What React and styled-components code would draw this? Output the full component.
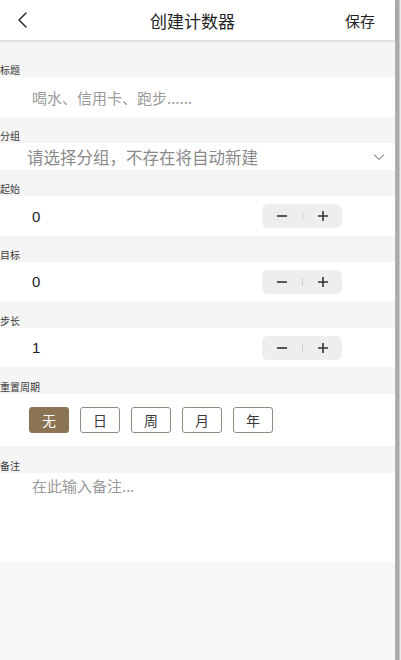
import React from "react";
import styled, { createGlobalStyle } from "styled-components";

const Global = createGlobalStyle`
  html, body { margin: 0; padding: 0; background: #ffffff; }
  body { font-family: "Noto Sans CJK SC", "Noto Sans", sans-serif; -webkit-font-smoothing: antialiased; }
  * { box-sizing: border-box; }
`;

const Frame = styled.div`
  display: flex;
  width: 401px;
  height: 660px;
  overflow: hidden;
`;

const Page = styled.div`
  width: 395px;
  display: flex;
  flex-direction: column;
  background: #f7f7f7;
`;

const Scrollbar = styled.div`
  width: 6px;
  background: linear-gradient(to right, #b8b8b8 0, #a6a6a6 2px, #b0b0b0 4px, #e4e4e4 5px, #f2f2f2 6px);
`;

const Header = styled.div`
  height: 40px;
  display: grid;
  grid-template-columns: 60px 1fr 60px;
  align-items: center;
  background: #fff;
  box-shadow: 0 1px 3px rgba(0, 0, 0, 0.16);
  position: relative;
  z-index: 1;
`;

const Back = styled.div`
  padding-left: 16px;
  display: flex;
  align-items: center;
  height: 100%;
`;

const Title = styled.div`
  text-align: center;
  font-size: 17px;
  color: #222;
  margin-right: 10px;
`;

const Save = styled.div`
  font-size: 15px;
  color: #222;
  text-align: left;
  padding-left: 10px;
`;

const Band = styled.div`
  background: #f5f5f5;
  height: ${(p) => p.$h}px;
  display: flex;
  align-items: flex-end;
  padding-bottom: 0;
  font-size: 10px;
  line-height: 14px;
  color: #3a3a3a;
`;

const Row = styled.div`
  background: #fff;
  height: ${(p) => p.$h}px;
  display: flex;
  align-items: ${(p) => (p.$top ? "flex-start" : "center")};
  padding-left: ${(p) => p.$pl || 32}px;
  padding-right: ${(p) => p.$pr || 53}px;
  padding-top: ${(p) => p.$pt || 0}px;
`;

const Placeholder = styled.div`
  flex: 1;
  font-size: ${(p) => p.$fs || 15}px;
  color: ${(p) => p.$c || "#9a9a9a"};
  white-space: nowrap;
`;

const Value = styled.div`
  flex: 1;
  font-size: 15px;
  color: #222;
  font-family: "Liberation Sans", "Noto Sans", sans-serif;
`;

const Stepper = styled.div`
  width: 80px;
  height: 24px;
  border-radius: 6px;
  background: #eeeeee;
  display: flex;
  align-items: center;
  justify-content: center;
`;

const StepBtn = styled.div`
  width: 20px;
  display: flex;
  justify-content: center;
  align-items: center;
`;

const Sep = styled.div`
  width: 1px;
  height: 8px;
  background: #d2d2d2;
  margin: 0 10px;
`;

const Chevron = styled.div`
  display: flex;
  align-items: center;
`;

const Periods = styled.div`
  display: flex;
  gap: 11px;
  padding-left: 29px;
  padding-top: 13px;
`;

const PeriodBtn = styled.div`
  width: 40px;
  height: 26px;
  border: 1.5px solid ${(p) => (p.$active ? "#8a7453" : "#928a7c")};
  border-radius: 3px;
  background: ${(p) => (p.$active ? "#8a7453" : "#fff")};
  color: ${(p) => (p.$active ? "#fff" : "#3a3a3a")};
  font-size: 14px;
  display: flex;
  align-items: center;
  justify-content: center;
`;

const PeriodRow = styled.div`
  background: #fff;
  height: 52px;
`;

const Minus = () => (
  <svg width="12" height="12" viewBox="0 0 12 12">
    <path d="M1 6h10" stroke="#333" strokeWidth="1.6" />
  </svg>
);
const Plus = () => (
  <svg width="12" height="12" viewBox="0 0 12 12">
    <path d="M1 6h10M6 1v10" stroke="#333" strokeWidth="1.6" />
  </svg>
);

const Counter = ({ value }) => (
  <>
    <Value>{value}</Value>
    <Stepper>
      <StepBtn><Minus /></StepBtn>
      <Sep />
      <StepBtn><Plus /></StepBtn>
    </Stepper>
  </>
);

export default function App() {
  const periods = ["无", "日", "周", "月", "年"];
  return (
    <>
      <Global />
      <Frame>
        <Page>
          <Header>
            <Back>
              <svg width="12" height="18" viewBox="0 0 12 18">
                <path d="M10 2L3 9l7 7" fill="none" stroke="#333" strokeWidth="1.6" strokeLinecap="round" strokeLinejoin="round" />
              </svg>
            </Back>
            <Title>创建计数器</Title>
            <Save>保存</Save>
          </Header>
          <Band $h={37}>标题</Band>
          <Row $h={40}>
            <Placeholder>喝水、信用卡、跑步......</Placeholder>
          </Row>
          <Band $h={26}>分组</Band>
          <Row $h={27} $pl={27} $pr={10}>
            <Placeholder $fs={16.5} $c="#8a8a8a">请选择分组，不存在将自动新建</Placeholder>
            <Chevron>
              <svg width="12" height="8" viewBox="0 0 12 8">
                <path d="M1 1.5l5 5 5-5" fill="none" stroke="#999" strokeWidth="1.2" />
              </svg>
            </Chevron>
          </Row>
          <Band $h={26}>起始</Band>
          <Row $h={40}>
            <Counter value="0" />
          </Row>
          <Band $h={26}>目标</Band>
          <Row $h={39}>
            <Counter value="0" />
          </Row>
          <Band $h={27}>步长</Band>
          <Row $h={39}>
            <Counter value="1" />
          </Row>
          <Band $h={27}>重置周期</Band>
          <PeriodRow>
            <Periods>
              {periods.map((p, i) => (
                <PeriodBtn key={p} $active={i === 0}>{p}</PeriodBtn>
              ))}
            </Periods>
          </PeriodRow>
          <Band $h={27}>备注</Band>
          <Row $h={89} $top $pt={2}>
            <Placeholder>在此输入备注...</Placeholder>
          </Row>
        </Page>
        <Scrollbar />
      </Frame>
    </>
  );
}
